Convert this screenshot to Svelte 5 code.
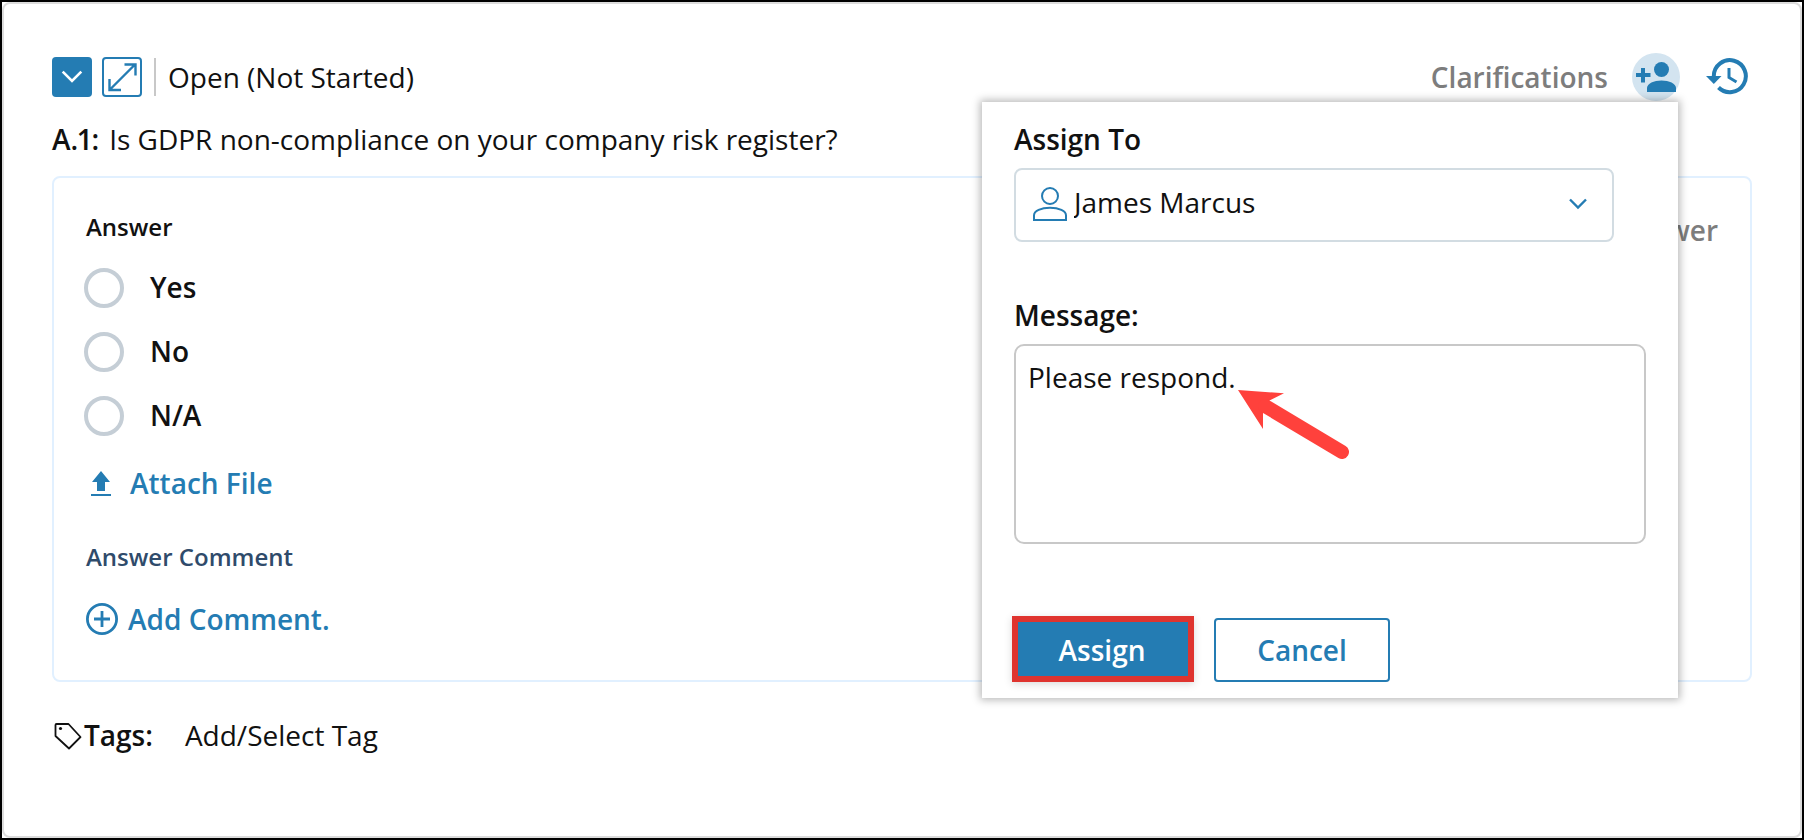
<script>
    let respuesta = $state("");
    let asignado = $state("James Marcus");
    let mensaje = $state("Please respond.");

    const opciones = ["Yes", "No", "N/A"];
</script>


<div class="frame">
<main class="panel">

    <header class="toolbar">
        <button class="square filled" type="button" aria-label="Collapse">
            <svg width="40" height="40" viewBox="0 0 40 40"><path d="M10.700 14.700l9.300 9.300 9.300-9.300" fill="none" stroke="currentColor" stroke-width="2.600"/></svg>
        </button>
        <button class="square" type="button" aria-label="Expand">
            <svg width="36" height="36" viewBox="0 0 36 36"><path d="M6 30.500L31 5.500M20.500 5.500h11v11M5.500 20v11h11.500" fill="none" stroke="currentColor" stroke-width="2.400"/></svg>
        </button>
        <span class="divider"></span>
        <span class="status">Open (Not Started)</span>

        <a class="clarifications" href="#clarifications">Clarifications</a>
        <button class="round" type="button" aria-label="Assign user">
            <svg width="48" height="48" viewBox="0 0 48 48">
                <g fill="currentColor">
                    <path d="M9 15h4v5h5.500v4H13v5.500H9V24H4v-4h5z"/>
                    <circle cx="29.500" cy="16.500" r="7.500"/>
                    <path d="M15 39v-4c0-4.500 7-7.500 14.500-7.500S44 30.500 44 35v4z"/>
                </g>
            </svg>
        </button>
        <button class="history" type="button" aria-label="History">
            <svg width="44" height="40" viewBox="0 0 44 40">
                <path d="M7.800 20V19A16 16 0 1 1 12.500 30.500" fill="none" stroke="currentColor" stroke-width="4"/>
                <path d="M0 19h15.500l-7.700 8z" fill="currentColor"/>
                <path d="M23 11v9.500l7.500 4.500" fill="none" stroke="currentColor" stroke-width="3"/>
            </svg>
        </button>

        <form class="popup" onsubmit={(e) => e.preventDefault()}>
            <label for="assign-to">Assign To</label>
            <div class="select-box">
                <svg class="person" width="34" height="34" viewBox="0 0 34 34">
                    <g fill="none" stroke="currentColor" stroke-width="2">
                        <circle cx="17" cy="9" r="8"/>
                        <path d="M1 33v-4.500C1 24 8 20.800 17 20.800S33 24 33 28.500V33z"/>
                    </g>
                </svg>
                <select id="assign-to" bind:value={asignado}>
                    <option value="James Marcus">James Marcus</option>
                </select>
                <svg class="chevron" width="18" height="12" viewBox="0 0 18 12"><path d="M1 1.500l8 8 8-8" fill="none" stroke="currentColor" stroke-width="2.400"/></svg>
            </div>

            <label for="message">Message:</label>
            <div class="message-box">
                <textarea id="message" bind:value={mensaje}></textarea>
                <svg class="arrow" width="112" height="70" viewBox="0 0 112 70">
                    <path d="M0 0L46 3.300 31.500 10.500 25 23.500 25 39z" fill="#ff413c"/>
                    <path d="M27 16L104 62" stroke="#ff413c" stroke-width="14" stroke-linecap="round"/>
                </svg>
            </div>

            <div class="buttons">
                <button class="assign" type="submit">Assign</button>
                <button class="cancel" type="button">Cancel</button>
            </div>
        </form>
    </header>

    <h1><b>A.1:</b> <span>Is GDPR non-compliance on your company risk register?</span></h1>

    <section class="card">
        <div class="card-head">
            <h2 id="answer">Answer</h2>
            <button class="clear" type="button">Clear Answer</button>
        </div>

        <div class="options" role="radiogroup" aria-labelledby="answer">
            {#each opciones as opcion}
            <label>
                <input type="radio" name="respuesta" value={opcion} bind:group={respuesta}>
                {opcion}
            </label>
            {/each}
        </div>

        <button class="action attach" type="button">
            <svg width="32" height="32" viewBox="0 0 32 32"><path d="M15 4l9 11h-5v9h-8v-9H6zM5 27h20v2H5z" fill="currentColor"/></svg>
            Attach File
        </button>

        <h2 class="comment-title">Answer Comment</h2>

        <button class="action" type="button">
            <svg width="32" height="32" viewBox="0 0 32 32"><g fill="none" stroke="currentColor" stroke-width="2.800"><circle cx="16" cy="16" r="14.600"/><path d="M16 8v16M8 16h16"/></g></svg>
            Add Comment.
        </button>
    </section>

    <footer class="tags">
        <svg width="30" height="30" viewBox="0 0 30 30">
            <path d="M4.500 4h12L28.500 17 17 28.500 3.500 16V5q0-1 1-1z" fill="none" stroke="currentColor" stroke-width="1.800" stroke-linejoin="round"/>
            <circle cx="8.500" cy="8.500" r="1.600" fill="currentColor"/>
        </svg>
        <b>Tags:</b>
        <a href="#tags">Add/Select Tag</a>
    </footer>

</main>
</div>


<style>

:global(body){
    margin:0;
    background:#fff;
}

*{
    box-sizing:border-box;
    margin:0;
    padding:0;
    font-family:"Open Sans", "Noto Sans", sans-serif;
}

/* Marco */
.frame{
    display:flex;
    min-height:100vh;
    border:2px solid #000;
    background:#fff;
}

.panel{
    flex:1;
    padding:53px 48px 48px;
    border:2px solid #dcdcdc;
    border-radius:8px;
    color:#111;
    font-size:28px;
    line-height:40px;
}

button{
    border:none;
    background:none;
    color:#247cb3;
    font-size:28px;
    font-weight:600;
    line-height:40px;
    cursor:pointer;
}

svg{
    display:block;
    flex:none;
}

a{
    color:inherit;
    text-decoration:none;
}

b{
    font-weight:600;
}

/* Barra superior */
.toolbar{
    position:relative;
    display:flex;
    align-items:center;
    height:40px;
}

.square{
    width:40px;
    height:40px;
    margin-right:10px;
    border:2px solid #247cb3;
    border-radius:4px;
}

.square.filled{
    border:none;
    background:#247cb3;
    color:#fff;
}

.divider{
    width:2px;
    height:38px;
    margin:0 12px 0 2px;
    background:#c8c8c8;
}

.clarifications{
    margin-left:auto;
    margin-right:24px;
    color:#7d7d7d;
    font-weight:600;
}

.round{
    width:48px;
    height:48px;
    margin-right:26px;
    border-radius:50%;
    background:#d3e4f0;
}

.history{
    width:46px;
}

/* Ventana de asignación */
.popup{
    position:absolute;
    top:45px;
    right:74px;
    z-index:1;
    width:696px;
    padding:17px 32px 16px;
    background:#fff;
    box-shadow:0 0 8px 2px rgba(0,0,0,0.28);
}

.popup label{
    display:block;
    margin-bottom:9px;
    font-weight:600;
}

.select-box{
    position:relative;
    margin:0 32px 53px 0;
    color:#247cb3;
}

select{
    display:block;
    width:100%;
    height:74px;
    padding:0 58px 6px;
    border:2px solid #d2dce2;
    border-radius:8px;
    background:#fff;
    color:#111;
    font-size:28px;
    appearance:none;
}

.person{
    position:absolute;
    left:19px;
    top:19px;
}

.chevron{
    position:absolute;
    right:27px;
    top:30px;
}

.message-box{
    position:relative;
}

textarea{
    display:block;
    width:100%;
    height:200px;
    padding:11px 12px;
    border:2px solid #c8c8c8;
    border-radius:10px;
    color:#111;
    font-size:28px;
    line-height:40px;
    resize:none;
}

.arrow{
    position:absolute;
    left:224px;
    top:46px;
}

.buttons{
    display:flex;
    align-items:flex-end;
    gap:20px;
    margin:72px 0 0 -2px;
}

.assign{
    width:182px;
    height:66px;
    padding:2px 2px 0 0;
    border:6px solid #df342f;
    background:#247cb3;
    color:#fff;
    box-shadow:0 2px 8px rgba(0,0,0,0.15);
}

.cancel{
    width:176px;
    height:64px;
    border:2px solid #247cb3;
    border-radius:4px;
}

/* Pregunta */
h1{
    display:flex;
    gap:10px;
    margin:22px 0 17px;
    font-size:28px;
    font-weight:400;
}

h1 b{
    font-variant-numeric:proportional-nums;
}

/* Tarjeta */
.card{
    padding:32px 32px 41px;
    border:2px solid #e1f0ff;
    border-radius:8px;
}

.card-head{
    display:flex;
    justify-content:space-between;
    margin-bottom:18px;
}

h2{
    font-size:24px;
    font-weight:600;
    line-height:34px;
}

.clear{
    color:#7d7d7d;
}

.options{
    display:grid;
    gap:24px;
    margin:0 0 27px -2px;
}

.options label{
    display:flex;
    gap:26px;
    font-weight:600;
    line-height:38px;
}

input{
    width:40px;
    height:40px;
    border:4px solid #c5ced6;
    border-radius:50%;
    appearance:none;
}

input:checked{
    background:#247cb3;
    box-shadow:inset 0 0 0 6px #fff;
}

.action{
    display:flex;
    align-items:center;
    gap:10px;
}

.attach{
    gap:12px;
}

.comment-title{
    margin:37px 0 25px;
    color:#2f4b6b;
}

/* Etiquetas */
.tags{
    display:flex;
    align-items:center;
    margin-top:33px;
}

.tags b{
    margin-left:2px;
    margin-right:32px;
}

</style>
